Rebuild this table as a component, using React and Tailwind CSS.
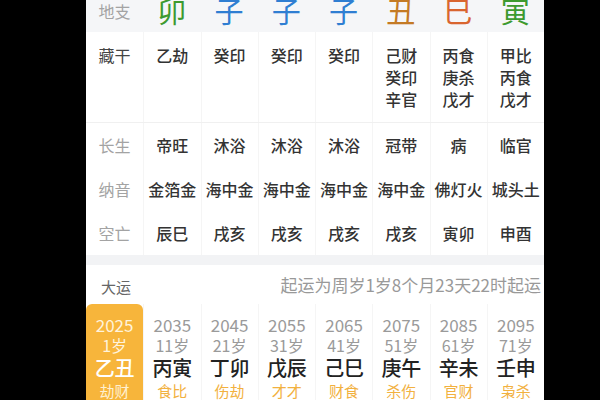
import React from "react";

const font = { fontFamily: '"Noto Sans CJK SC", "Noto Sans", sans-serif' };

const dizhi = [
  { c: "卯", cls: "text-[#3d9a2f]" },
  { c: "子", cls: "text-[#2f7ed2]" },
  { c: "子", cls: "text-[#2f7ed2]" },
  { c: "子", cls: "text-[#2f7ed2]" },
  { c: "丑", cls: "text-[#c47a24]" },
  { c: "巳", cls: "text-[#d9652f]" },
  { c: "寅", cls: "text-[#3d9a2f]" },
];

const canggan = [
  ["乙劫"],
  ["癸印"],
  ["癸印"],
  ["癸印"],
  ["己财", "癸印", "辛官"],
  ["丙食", "庚杀", "戊才"],
  ["甲比", "丙食", "戊才"],
];

const rows = [
  { label: "长生", vals: ["帝旺", "沐浴", "沐浴", "沐浴", "冠带", "病", "临官"] },
  { label: "纳音", vals: ["金箔金", "海中金", "海中金", "海中金", "海中金", "佛灯火", "城头土"] },
  { label: "空亡", vals: ["辰巳", "戌亥", "戌亥", "戌亥", "戌亥", "寅卯", "申酉"] },
];

const dayun = [
  { y: "2025", a: "1岁", g: "乙丑", s: "劫财" },
  { y: "2035", a: "11岁", g: "丙寅", s: "食比" },
  { y: "2045", a: "21岁", g: "丁卯", s: "伤劫" },
  { y: "2055", a: "31岁", g: "戊辰", s: "才才" },
  { y: "2065", a: "41岁", g: "己巳", s: "财食" },
  { y: "2075", a: "51岁", g: "庚午", s: "杀伤" },
  { y: "2085", a: "61岁", g: "辛未", s: "官财" },
  { y: "2095", a: "71岁", g: "壬申", s: "枭杀" },
];

export default function App() {
  return (
    <div className="w-[600px] h-[400px] bg-black overflow-hidden pl-[86px]" style={font}>
      <div className="w-[458px] h-[400px] bg-white flex flex-col">
        {/* 地支 row */}
        <div className="grid grid-cols-8 grid-rows-[32px] h-[32px] bg-[#f5f6f8] shrink-0 overflow-hidden">
          <div className="h-[32px] text-center text-[16px] leading-[16px] pt-[3px] text-[#a3a3a3]">地支</div>
          {dizhi.map((d, i) => (
            <div key={i} className="h-[32px] overflow-hidden flex justify-center">
              <span className={`block text-[29px] leading-[29px] -mt-[4px] ${d.cls}`}>{d.c}</span>
            </div>
          ))}
        </div>

        {/* 藏干 row */}
        <div className="grid grid-cols-8 h-[90px] shrink-0">
          <div className="pt-[12px] text-center text-[16px] leading-[22px] text-[#444]">藏干</div>
          {canggan.map((list, i) => (
            <div key={i} className="pt-[12px] flex flex-col items-center border-l border-[#f5f5f5]">
              {list.map((t, j) => (
                <div key={j} className="text-[16px] leading-[22px] font-medium text-[#333]">{t}</div>
              ))}
            </div>
          ))}
        </div>

        {/* other rows */}
        <div className="border-t border-[#f0f0f0] flex flex-col">
          {rows.map((r) => (
            <div key={r.label} className="grid grid-cols-8 h-[44px]">
              <div className="flex items-center justify-center text-[16px] text-[#a3a3a3]">{r.label}</div>
              {r.vals.map((v, i) => (
                <div key={i} className="flex items-center justify-center text-[16px] font-medium text-[#333] border-l border-[#f5f5f5]">
                  {v}
                </div>
              ))}
            </div>
          ))}
        </div>

        <div className="h-[10px] bg-[#f2f3f5] shrink-0" />

        {/* 大运 header */}
        <div className="h-[39px] flex items-center justify-between shrink-0">
          <div className="pl-[15px] pt-[5px] text-[15px] text-[#666]">大运</div>
          <div className="pr-[3px] text-[17px] text-[#999]">起运为周岁1岁8个月23天22时起运</div>
        </div>

        {/* 大运 cards */}
        <div className="grid grid-cols-8 flex-1">
          {dayun.map((d, i) => (
            <div
              key={i}
              className={
                i === 0
                  ? "flex flex-col items-center pt-[10px] bg-[#f7b53b] rounded-t-[6px]"
                  : "flex flex-col items-center pt-[10px] border-l border-[#f5f5f5]"
              }
            >
              <div className={`text-[17px] leading-[21px] ${i === 0 ? "text-[#fff3dc]" : "text-[#9a9a9a]"}`}>{d.y}</div>
              <div className={`text-[16px] leading-[21px] ${i === 0 ? "text-[#fff3dc]" : "text-[#9a9a9a]"}`}>{d.a}</div>
              <div className={`text-[20px] leading-[24px] font-medium ${i === 0 ? "text-white" : "text-[#222]"}`}>{d.g}</div>
              <div className={`text-[15px] leading-[22px] ${i === 0 ? "text-[#fff0d0]" : "text-[#f2b13f]"}`}>{d.s}</div>
            </div>
          ))}
        </div>
      </div>
    </div>
  );
}
